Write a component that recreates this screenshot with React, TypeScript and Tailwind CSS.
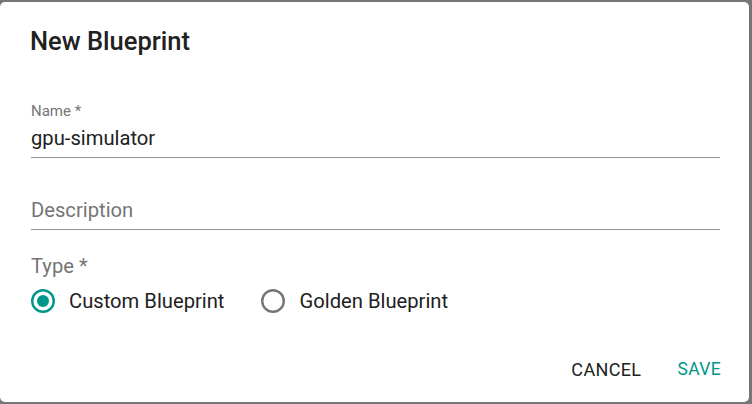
function Radio({ checked }: { checked: boolean }) {
  return (
    <svg width="24" height="24" viewBox="0 0 24 24" className="shrink-0">
      <circle
        cx="12"
        cy="12"
        r="10.8"
        fill="none"
        stroke={checked ? "#00968a" : "#757575"}
        strokeWidth="2.4"
      />
      {checked && <circle cx="12" cy="12" r="6" fill="#00968a" />}
    </svg>
  );
}

export default function App() {
  return (
    <div
      className="w-[752px] h-[404px] bg-[#767676] pt-[2px] pr-[3px] pb-[2px] overflow-hidden"
      style={{ fontFamily: "Roboto, 'Liberation Sans', sans-serif" }}
    >
      <div className="w-[749px] h-[400px] bg-white rounded-[5px] flex flex-col">
        <h2 className="pt-[20px] pl-[30px] text-[25.5px] leading-[38px] font-medium text-[#212121]">
          New Blueprint
        </h2>

        <div className="pl-[31px] pr-[29px] flex flex-col">
          <div className="mt-[42px]">
            <div className="h-[18px] text-[15px] leading-[18px] text-[#757575]">
              Name *
            </div>
            <div className="h-[38px] flex items-center text-[20.2px] text-[#212121] border-b border-[#949494]">
              gpu-simulator
            </div>
          </div>

          <div className="mt-[34px]">
            <div className="h-[38px] flex items-center text-[20.2px] text-[#757575] border-b border-[#949494]">
              Description
            </div>
          </div>

          <div className="mt-[24px] h-[24px] leading-[24px] text-[20.2px] text-[#757575]">
            Type *
          </div>

          <div className="mt-[3px] h-[40px] flex items-center text-[20.2px] text-[#212121]">
            <label className="flex items-center gap-[14px]">
              <Radio checked />
              <span>Custom Blueprint</span>
            </label>
            <label className="flex items-center gap-[14px] ml-[37px]">
              <Radio checked={false} />
              <span>Golden Blueprint</span>
            </label>
          </div>
        </div>

        <div className="mt-auto mb-[11px] pr-[18px] flex justify-end items-center gap-[16px]">
          <button className="h-[43px] px-[10px] text-[18px] tracking-[0.02em] text-[#212121]">
            CANCEL
          </button>
          <button className="h-[43px] px-[10px] text-[17.5px] tracking-[0.02em] text-[#00968a]">
            SAVE
          </button>
        </div>
      </div>
    </div>
  );
}
